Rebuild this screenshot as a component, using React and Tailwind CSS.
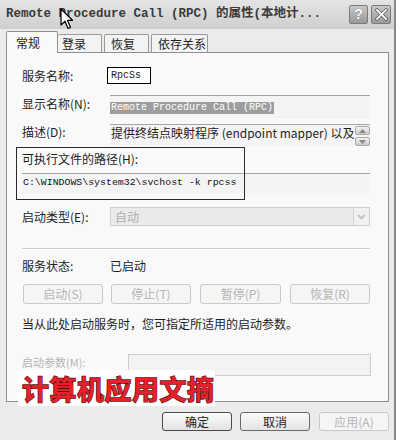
import React from "react";

const cjk = "font-['Noto_Sans_CJK_SC',sans-serif]";
const mono = "font-['Liberation_Mono','Noto_Sans_CJK_SC',monospace]";

function DisabledBtn({ children, w = "w-[80px]", className = "" }) {
  return (
    <div
      className={`${w} h-[20px] rounded-[3px] border border-[#c9c9c9] bg-[#f5f5f5] flex items-center justify-center text-[12px] text-[#b4b4b4] ${className}`}
    >
      {children}
    </div>
  );
}

export default function App() {
  return (
    <div className="w-[400px] h-[440px] bg-white overflow-hidden">
      <div
        className={`relative w-[396px] h-[440px] bg-[#ebebeb] border-r-[2px] border-[#8a8a8a] flex flex-col ${cjk} text-[#1e1e1e]`}
      >
        {/* Title bar */}
        <div className="h-[29px] shrink-0 bg-gradient-to-b from-[#e4e4e4] to-[#cfcfcf] flex items-center pl-[6px] pr-[3px]">
          <div
            className={`${mono} font-bold text-[12.5px] text-[#3a3a3a] whitespace-nowrap flex-1 overflow-hidden`}
          >
            Remote Procedure Call (RPC) 的属性(本地计...
          </div>
          <div className="flex gap-[3px] mt-[-1px]">
            <div className="w-[19px] h-[19px] rounded-[2px] border border-[#7a7a7a] bg-gradient-to-b from-[#c8c8c8] to-[#9a9a9a] flex items-center justify-center text-white text-[15px] font-bold font-['Liberation_Sans',sans-serif] [text-shadow:0_0_1px_#444]">
              ?
            </div>
            <div className="w-[20px] h-[19px] rounded-[2px] border border-[#7a7a7a] bg-gradient-to-b from-[#c8c8c8] to-[#9a9a9a] flex items-center justify-center">
              <svg width="13" height="13" viewBox="0 0 13 13">
                <path d="M2 2 L11 11 M11 2 L2 11" stroke="#555" strokeWidth="3.2" strokeLinecap="square" />
                <path d="M2 2 L11 11 M11 2 L2 11" stroke="#fff" strokeWidth="1.8" strokeLinecap="square" />
              </svg>
            </div>
          </div>
        </div>

        {/* Tabs */}
        <div className="h-[23px] shrink-0 flex items-end pl-[6px] relative z-10">
          <div className="w-[52px] h-[22px] bg-[#f9f9f9] border border-b-0 border-[#8f8f8f] rounded-t-[2px] flex items-center pl-[9px] text-[12px] mb-[-1px]">
            常规
          </div>
          <div className="w-[44px] h-[18px] bg-[#f3f3f3] border border-b-0 border-l-0 border-[#9a9a9a] rounded-t-[2px] flex items-center pl-[4px] text-[12px]">
            登录
          </div>
          <div className="w-[45px] h-[18px] ml-[2px] bg-[#f3f3f3] border border-b-0 border-[#9a9a9a] rounded-t-[2px] flex items-center pl-[6px] text-[12px]">
            恢复
          </div>
          <div className="w-[57px] h-[18px] ml-[2px] bg-[#f3f3f3] border border-b-0 border-[#9a9a9a] rounded-t-[2px] flex items-center pl-[6px] text-[12px]">
            依存关系
          </div>
        </div>

        {/* Panel */}
        <div className="relative ml-[6px] w-[383px] h-[350px] shrink-0 bg-[#f9f9f9] border border-[#8f8f8f] flex flex-col text-[12px] pt-[14px]">
          {/* Row 1 */}
          <div className="h-[17px] flex items-center pl-[15px]">
            <div className="w-[85px]">服务名称:</div>
            <div className={`w-[44px] h-[17px] border border-black bg-white flex items-center pl-[3px] ${mono} text-[10px]`}>
              RpcSs
            </div>
          </div>

          {/* Row 2 */}
          <div className="mt-[11px] h-[23px] flex items-start pl-[15px] pr-[18px]">
            <div className="w-[88px] h-[17px] flex items-center">显示名称(N):</div>
            <div className="flex-1 h-[23px] border-t border-[#a6a6a6] bg-[#f4f4f4] border-b border-b-[#f0f0f0]">
              <span className={`inline-block bg-[#9d9d9d] text-white ${mono} text-[10px] leading-[12px] px-[1px]`}>
                Remote Procedure Call (RPC)
              </span>
            </div>
          </div>

          {/* Row 3 */}
          <div className="mt-[6px] h-[22px] flex items-start pl-[15px] pr-[18px]">
            <div className="w-[88px] h-[15px] flex items-center">描述(D):</div>
            <div className="flex-1 h-[22px] border-t border-[#a6a6a6] bg-[#f4f4f4] flex items-start">
              <div className="flex-1 whitespace-nowrap overflow-hidden leading-[15px] text-[12px] pl-[1px]">
                提供终结点映射程序 (endpoint mapper) 以及
              </div>
              <div className="w-[15px] flex flex-col gap-[2px] pt-[1px]">
                <div className="h-[9px] rounded-[2px] border border-[#a9a9a9] bg-gradient-to-b from-[#f3f3f3] to-[#c9c9c9] flex items-center justify-center">
                  <svg width="7" height="4" viewBox="0 0 7 4"><path d="M0 4 L3.5 0 L7 4Z" fill="#888" /></svg>
                </div>
                <div className="h-[9px] rounded-[2px] border border-[#a9a9a9] bg-gradient-to-b from-[#f3f3f3] to-[#c9c9c9] flex items-center justify-center">
                  <svg width="7" height="4" viewBox="0 0 7 4"><path d="M0 0 L3.5 4 L7 0Z" fill="#888" /></svg>
                </div>
              </div>
            </div>
          </div>

          {/* Path */}
          <div className="mt-[6px] h-[14px] pl-[15px] flex items-center">可执行文件的路径(H):</div>
          <div className="mt-[7px] ml-[15px] mr-[18px] h-[20px] border-t border-[#a6a6a6] bg-[#f4f4f4] flex items-center">
            <span className={`${mono} text-[9.9px] text-[#111] pl-[1px]`}>
              C:\WINDOWS\system32\svchost -k rpcss
            </span>
          </div>

          {/* Startup type */}
          <div className="mt-[14px] h-[19px] flex items-center pl-[15px] pr-[18px]">
            <div className="w-[88px]">启动类型(E):</div>
            <div className="flex-1 h-[19px] border border-[#cfcfcf] bg-[#eaeaea] flex items-center">
              <div className="flex-1 pl-[4px] text-[#b0b0b0]">自动</div>
              <div className="w-[16px] h-[17px] border-l border-[#d6d6d6] bg-[#f1f1f1] flex items-center justify-center">
                <svg width="9" height="6" viewBox="0 0 9 6">
                  <path d="M1 1 L4.5 4.5 L8 1" stroke="#c2c2c2" strokeWidth="1.8" fill="none" />
                </svg>
              </div>
            </div>
          </div>

          {/* Separator */}
          <div className="mt-[22px] ml-[15px] mr-[18px] h-[2px] border-t border-[#cfcfcf] border-b border-b-white" />

          {/* Status */}
          <div className="mt-[9px] h-[14px] flex items-center pl-[15px]">
            <div className="w-[88px]">服务状态:</div>
            <div>已启动</div>
          </div>

          {/* Buttons */}
          <div className="mt-[11px] flex pl-[16px]">
            <DisabledBtn>启动(S)</DisabledBtn>
            <DisabledBtn className="ml-[8px]">停止(T)</DisabledBtn>
            <DisabledBtn w="w-[81px]" className="ml-[9px]">暂停(P)</DisabledBtn>
            <DisabledBtn className="ml-[9px]">恢复(R)</DisabledBtn>
          </div>

          {/* Info text */}
          <div className="mt-[13px] h-[14px] flex items-center pl-[15px]">
            当从此处启动服务时，您可指定所适用的启动参数。
          </div>

          {/* Params */}
          <div className="mt-[23px] h-[22px] flex items-start pl-[15px] pr-[17px]">
            <div className="w-[106px] text-[#b4b4b4] text-[11px] leading-[11px] mt-[3px]">启动参数(M):</div>
            <div className="flex-1 h-[22px] border border-[#cdcdcd] bg-[#f3f3f3]" />
          </div>

          {/* annotation box */}
          <div className="absolute left-[9px] top-[94px] w-[229px] h-[53px] border-[1.5px] border-[#2a2a2a] pointer-events-none" />
        </div>

        {/* Bottom buttons */}
        <div className="mt-[10px] h-[19px] flex justify-end pr-[5px] text-[12px]">
          <div className="w-[70px] h-[19px] rounded-[3px] border-[1.5px] border-[#4a4a4a] bg-gradient-to-b from-[#fbfbfb] to-[#e3e3e3] flex items-center justify-center">
            确定
          </div>
          <div className="ml-[8px] w-[70px] h-[19px] rounded-[3px] border border-[#6a6a6a] bg-gradient-to-b from-[#fbfbfb] to-[#e3e3e3] flex items-center justify-center">
            取消
          </div>
          <div className="ml-[9px] w-[70px] h-[19px] rounded-[3px] border border-[#c9c9c9] bg-[#f5f5f5] flex items-center justify-center text-[#b4b4b4]">
            应用(A)
          </div>
        </div>

        {/* Watermark */}
        <div className="absolute left-[18px] top-[370px] w-[197px] h-[36px] bg-white flex items-center pl-[4px]">
          <span className="text-[27px] leading-none font-bold text-[#e8202a] tracking-[0.5px] [-webkit-text-stroke:1.4px_#5a1212] [paint-order:stroke_fill]">
            计算机应用文摘
          </span>
        </div>

        {/* Cursor */}
        <svg className="absolute left-[60px] top-[8px]" width="14" height="23" viewBox="0 0 14 23">
          <path d="M1 1 L1 17 L5 13.2 L8 20.5 L10.5 19.5 L7.5 12.3 L12.5 12.3 Z" fill="white" stroke="black" strokeWidth="1.2" strokeLinejoin="round" />
        </svg>
      </div>
    </div>
  );
}
